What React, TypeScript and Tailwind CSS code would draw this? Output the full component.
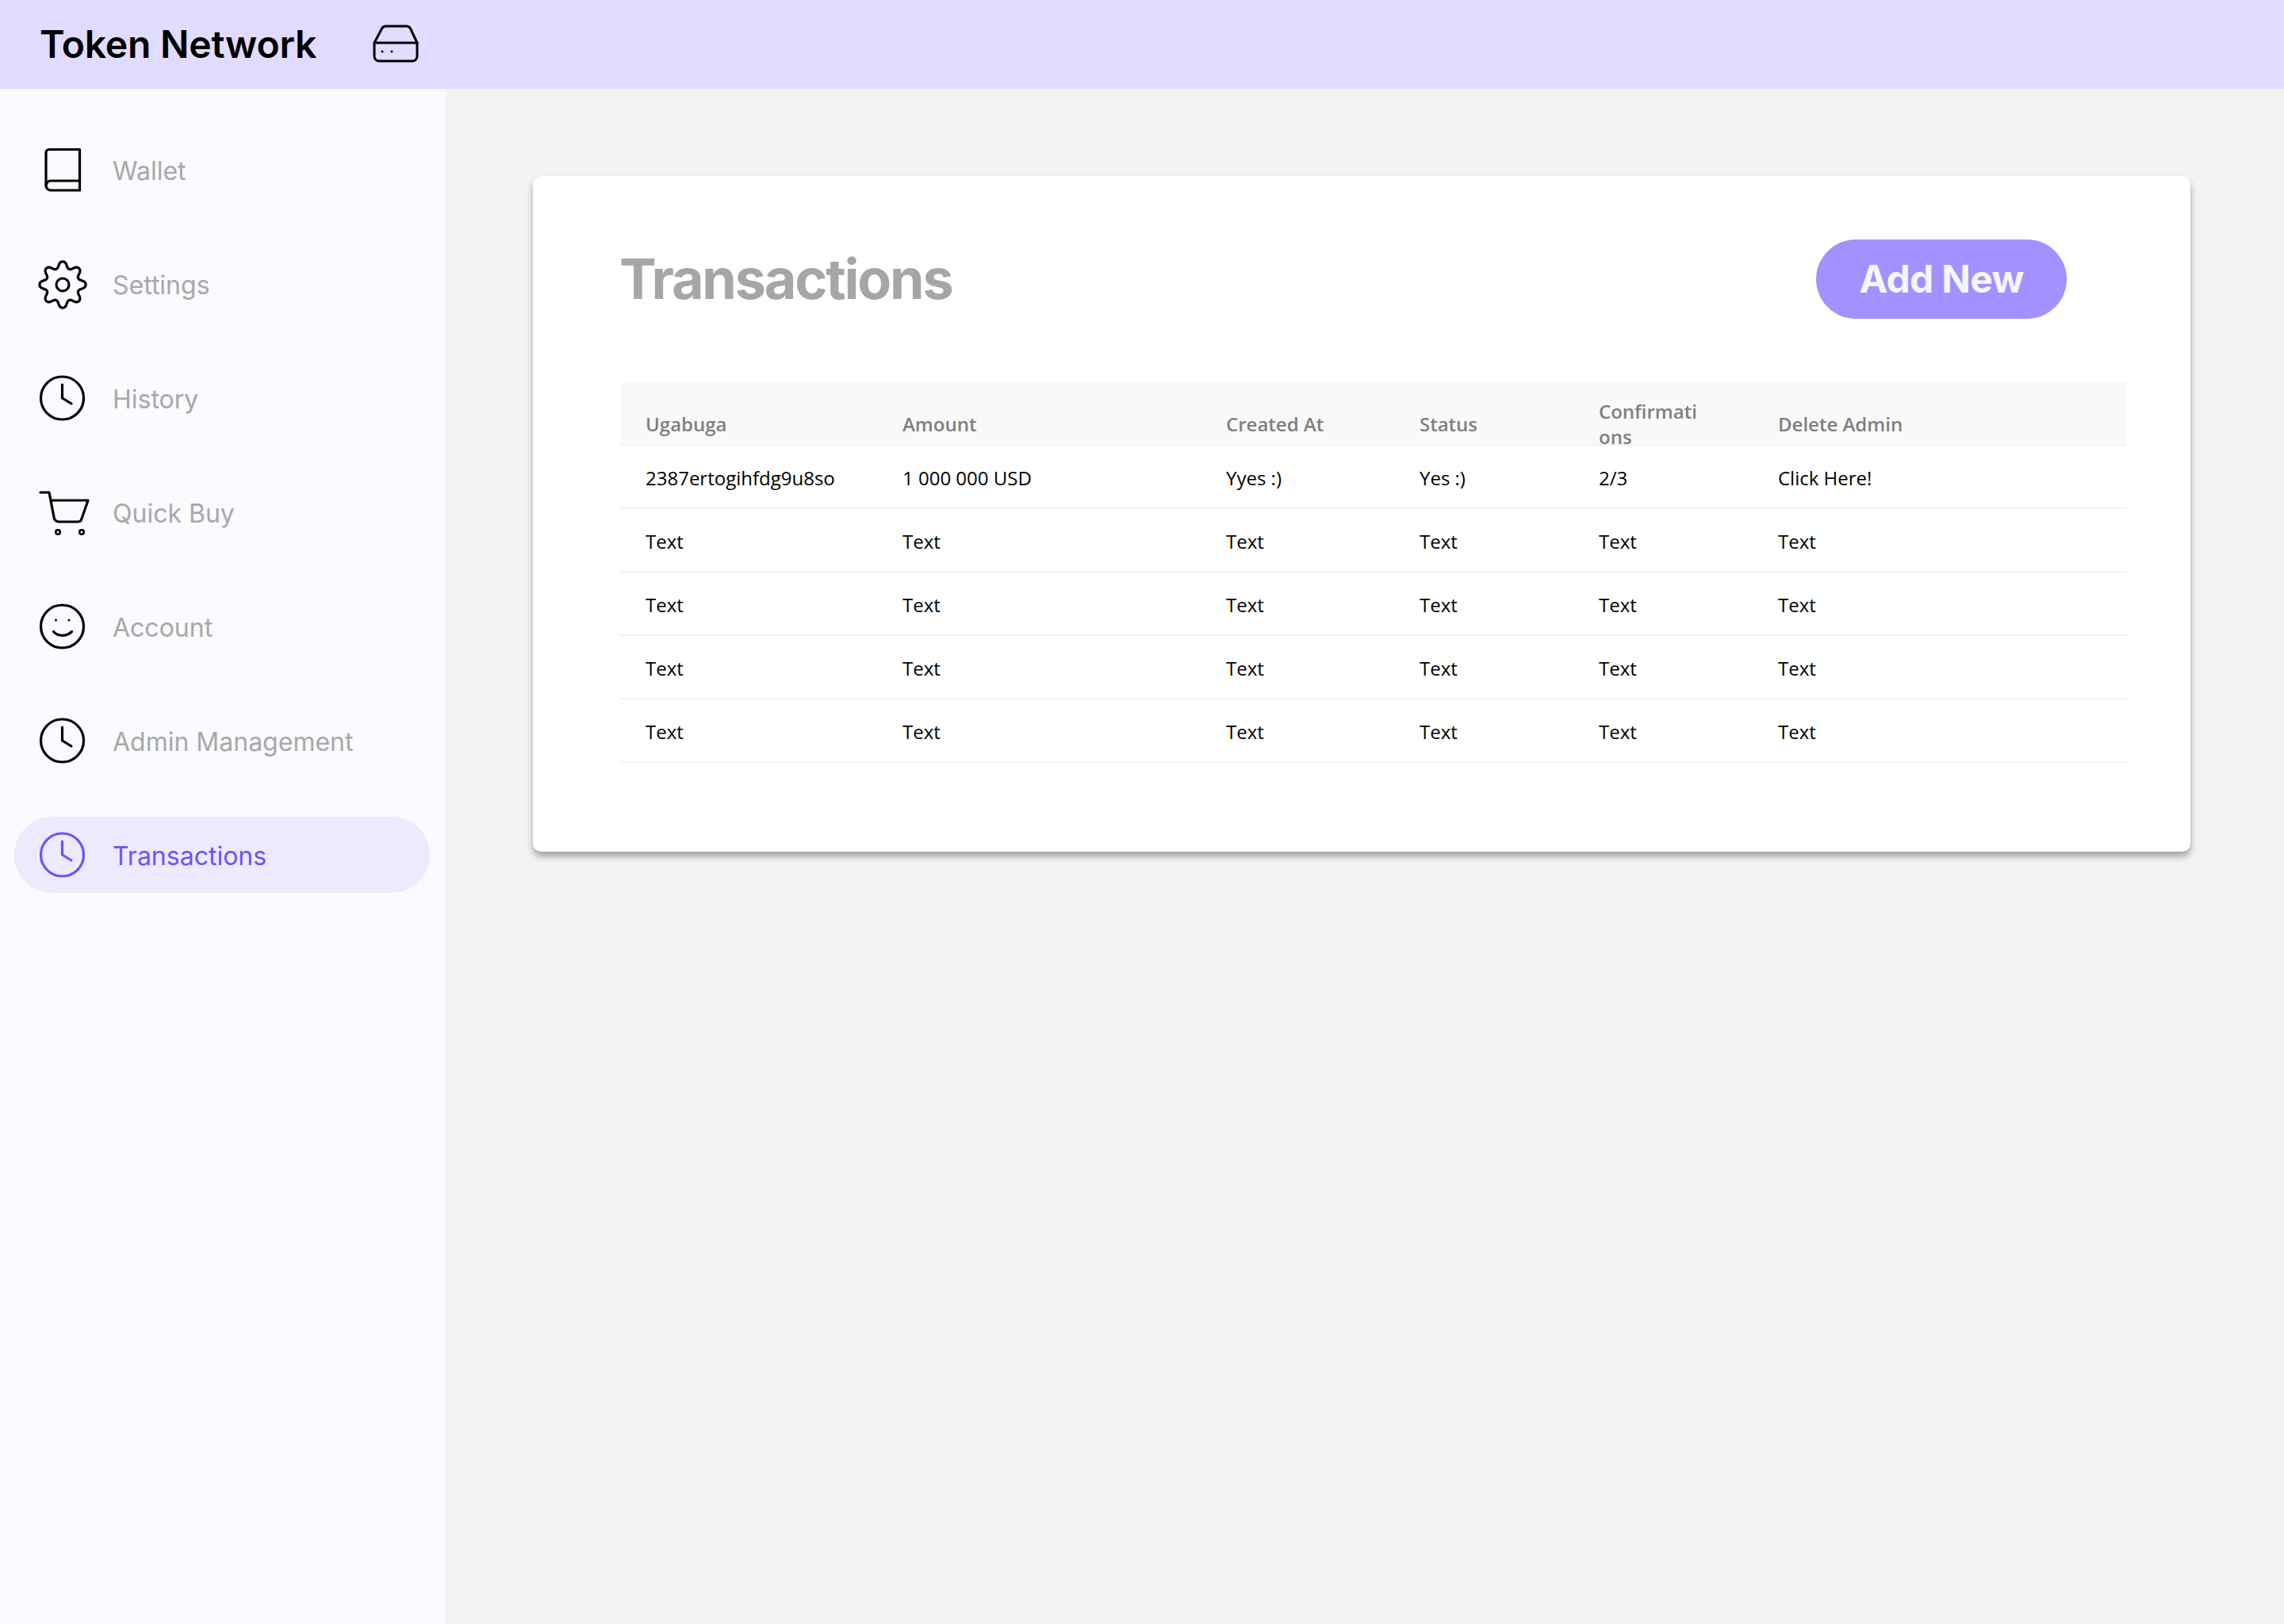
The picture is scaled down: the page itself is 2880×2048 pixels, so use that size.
import type { ReactNode } from 'react'

const inter = "font-['Inter',sans-serif]"

function ClockIcon() {
  return (
    <>
      <circle cx="32.5" cy="32" r="27" />
      <path d="M32.5 15V32L44 39" />
    </>
  )
}

function gearPath() {
  const pts: string[] = []
  for (let i = 0; i < 360; i++) {
    const a = (i / 360) * Math.PI * 2
    // slightly flattened cosine so the lobes stay round
    const r = 25.2 + 3.9 * (Math.tanh(Math.cos(8 * a)) / Math.tanh(1))
    pts.push(`${(33 + r * Math.sin(a)).toFixed(2)} ${(33 - r * Math.cos(a)).toFixed(2)}`)
  }
  return `M${pts.join('L')}Z`
}

const navItems: { label: string; icon: ReactNode; active?: boolean }[] = [
  {
    label: 'Wallet',
    icon: (
      <>
        <path d="M54.5 6.5H16a4 4 0 0 0-4 4V52a6 6 0 0 0 6 6H54.5Z" />
        <path d="M12 52a6 6 0 0 1 6-6H54.5" />
      </>
    ),
  },
  {
    label: 'Settings',
    icon: (
      <>
        <path d={gearPath()} />
        <circle cx="33" cy="33" r="8" />
      </>
    ),
  },
  { label: 'History', icon: <ClockIcon /> },
  {
    label: 'Quick Buy',
    icon: (
      <>
        <path d="M5 7H16L22 38a6 6 0 0 0 6 6H52a5 5 0 0 0 5-4L65 17H18" />
        <circle cx="27" cy="57" r="2.8" strokeWidth="2.6" />
        <circle cx="57" cy="57" r="2.8" strokeWidth="2.6" />
      </>
    ),
  },
  {
    label: 'Account',
    icon: (
      <>
        <circle cx="32.5" cy="32" r="27" />
        <circle cx="24.5" cy="24" r="1.5" fill="currentColor" stroke="none" />
        <circle cx="41" cy="24" r="1.5" fill="currentColor" stroke="none" />
        <path d="M21.5 38.5C27 45 38 45 44.5 38.5" />
      </>
    ),
  },
  { label: 'Admin Management', icon: <ClockIcon /> },
  { label: 'Transactions', icon: <ClockIcon />, active: true },
]

const columns = ['Ugabuga', 'Amount', 'Created At', 'Status', 'Confirmations', 'Delete Admin']

const rows = [
  ['2387ertogihfdg9u8so', '1 000 000 USD', 'Yyes :)', 'Yes :)', '2/3', 'Click Here!'],
  ['Text', 'Text', 'Text', 'Text', 'Text', 'Text'],
  ['Text', 'Text', 'Text', 'Text', 'Text', 'Text'],
  ['Text', 'Text', 'Text', 'Text', 'Text', 'Text'],
  ['Text', 'Text', 'Text', 'Text', 'Text', 'Text'],
]

const gridCols = 'grid grid-cols-[324px_408px_244px_226px_226px_1fr]'

function NavItem({ label, icon, active }: { label: string; icon: ReactNode; active?: boolean }) {
  return (
    <div
      className={`flex h-[96px] items-center gap-[32px] rounded-[48px] pl-[28px] ${
        active ? 'bg-[#edeaff] text-[#6c52ff]' : 'text-[#a8a8a8]'
      }`}
    >
      <svg
        viewBox="0 0 64 64"
        fill="none"
        stroke="currentColor"
        strokeWidth="3.2"
        strokeLinecap="round"
        strokeLinejoin="round"
        className={`h-[64px] w-[64px] shrink-0 overflow-visible ${active ? 'text-[#6c52ff]' : 'text-black'}`}
      >
        {icon}
      </svg>
      <span className={`${inter} pt-[3px] text-[32px] leading-[40px] font-normal`}>{label}</span>
    </div>
  )
}

export default function App() {
  return (
    <div className="flex h-screen w-full flex-col bg-[#f3f3f3]">
      <header className="flex h-[112px] shrink-0 items-center bg-[#e0dbff] pl-[50px]">
        <span className={`${inter} text-[48px] leading-[60px] font-semibold tracking-[-0.2px] text-black`}>
          Token Network
        </span>
        <svg
          viewBox="0 0 60 50"
          fill="none"
          stroke="currentColor"
          strokeWidth="3"
          strokeLinecap="round"
          strokeLinejoin="round"
          className="ml-[70px] h-[50px] w-[60px] text-black"
        >
          <path d="M3 23 12 6a6 6 0 0 1 5-4H44a6 6 0 0 1 5 4L57 23" />
          <path d="M3 23H57V40a6 6 0 0 1-6 6H9a6 6 0 0 1-6-6Z" />
          <circle cx="13" cy="34" r="1.5" fill="currentColor" stroke="none" />
          <circle cx="25" cy="34" r="1.5" fill="currentColor" stroke="none" />
        </svg>
      </header>

      <div className="flex min-h-0 flex-1">
        <aside className="flex w-[562px] shrink-0 flex-col gap-[48px] bg-[#fbfaff] pt-[54px] pr-[20px] pl-[18px]">
          {navItems.map((item) => (
            <NavItem key={item.label} {...item} />
          ))}
        </aside>

        <main className="flex-1 pt-[110px] pl-[110px]">
          <section className="h-[852px] w-[2090px] rounded-[10px] bg-white pt-[80px] pr-[80px] pl-[110px] shadow-[0_6px_8px_rgba(0,0,0,0.34)]">
            <div className="flex h-[100px] items-center justify-between pr-[76px]">
              <h1 className={`${inter} -ml-[1px] text-[70px] leading-[88px] font-bold tracking-[-2.2px] text-[#a6a6a6]`}>
                Transactions
              </h1>
              <button
                className={`${inter} h-[100px] w-[316px] rounded-[50px] bg-[#a391ff] text-[48px] font-bold tracking-[-0.7px] text-[#f4f6fc]`}
              >
                Add New
              </button>
            </div>

            <div className="mt-[80px] font-['Open_Sans',sans-serif] text-[24px] leading-[32px]">
              <div
                className={`${gridCols} h-[80px] content-center items-center border-b-2 border-[#f2f2f2] bg-[#f9f9f9] pt-[28px] font-semibold text-[#7f7f7f]`}
              >
                {columns.map((c) => (
                  <div key={c} className="px-[32px]">
                    {c === 'Confirmations' ? <div className="w-[132px] break-all">{c}</div> : c}
                  </div>
                ))}
              </div>
              {rows.map((row, i) => (
                <div key={i} className={`${gridCols} h-[80px] items-center border-b-2 border-[#f2f2f2] pt-[3px] text-black`}>
                  {row.map((cell, j) => (
                    <div key={j} className="px-[32px] whitespace-nowrap">
                      {cell}
                    </div>
                  ))}
                </div>
              ))}
            </div>
          </section>
        </main>
      </div>
    </div>
  )
}
